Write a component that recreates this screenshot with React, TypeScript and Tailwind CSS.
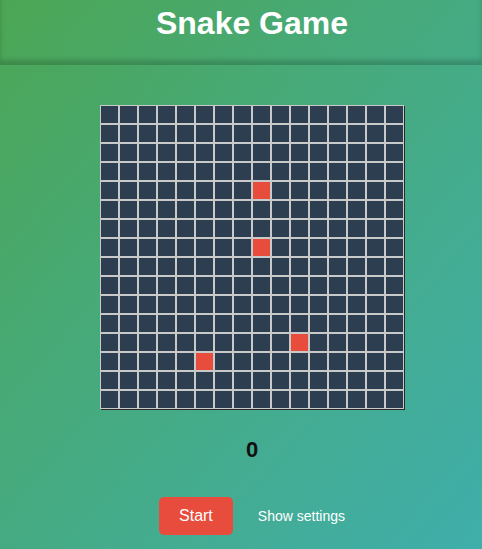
import React from 'react'

const SIZE = 16
const red = new Set(['4-8', '7-8', '12-10', '13-5'])

export default function App() {
  const cells = []
  for (let r = 0; r < SIZE; r++) {
    for (let c = 0; c < SIZE; c++) {
      const on = red.has(`${r}-${c}`)
      cells.push(
        <div key={`${r}-${c}`} className={`w-[17px] h-[17px] ${on ? 'bg-[#e74c3c]' : 'bg-[#2c3e50]'}`} />
      )
    }
  }

  return (
    <div
      className="min-h-[549px] w-[482px] bg-gradient-to-br from-[#4ca653] to-[#40aeab] text-white"
      style={{ fontFamily: '"Liberation Sans", Arial, sans-serif' }}
    >
      <header className="h-[65px] pt-[5px] pl-[22px] text-center shadow-[inset_0_-5px_5px_rgba(0,0,0,0.18)]">
        <h1 className="text-[32px] leading-[37px] font-bold">Snake Game</h1>
      </header>

      <main className="pl-[22px] flex flex-col items-center">
        <div className="mt-[40px] grid grid-cols-[repeat(16,17px)] gap-[2px] p-[1px] bg-[#c9c9c9] shadow-[1px_1px_0_#2a2a2a]">
          {cells}
        </div>

        <div className="mt-[28px] text-[22px] leading-[25px] font-bold text-[#111]">0</div>

        <div className="mt-[35px] flex items-center gap-[25px]">
          <button className="h-[38px] px-[20px] rounded-[5px] bg-[#e74c3c] text-white text-[16px]">Start</button>
          <button className="text-white text-[14px]">Show settings</button>
        </div>
      </main>
    </div>
  )
}
